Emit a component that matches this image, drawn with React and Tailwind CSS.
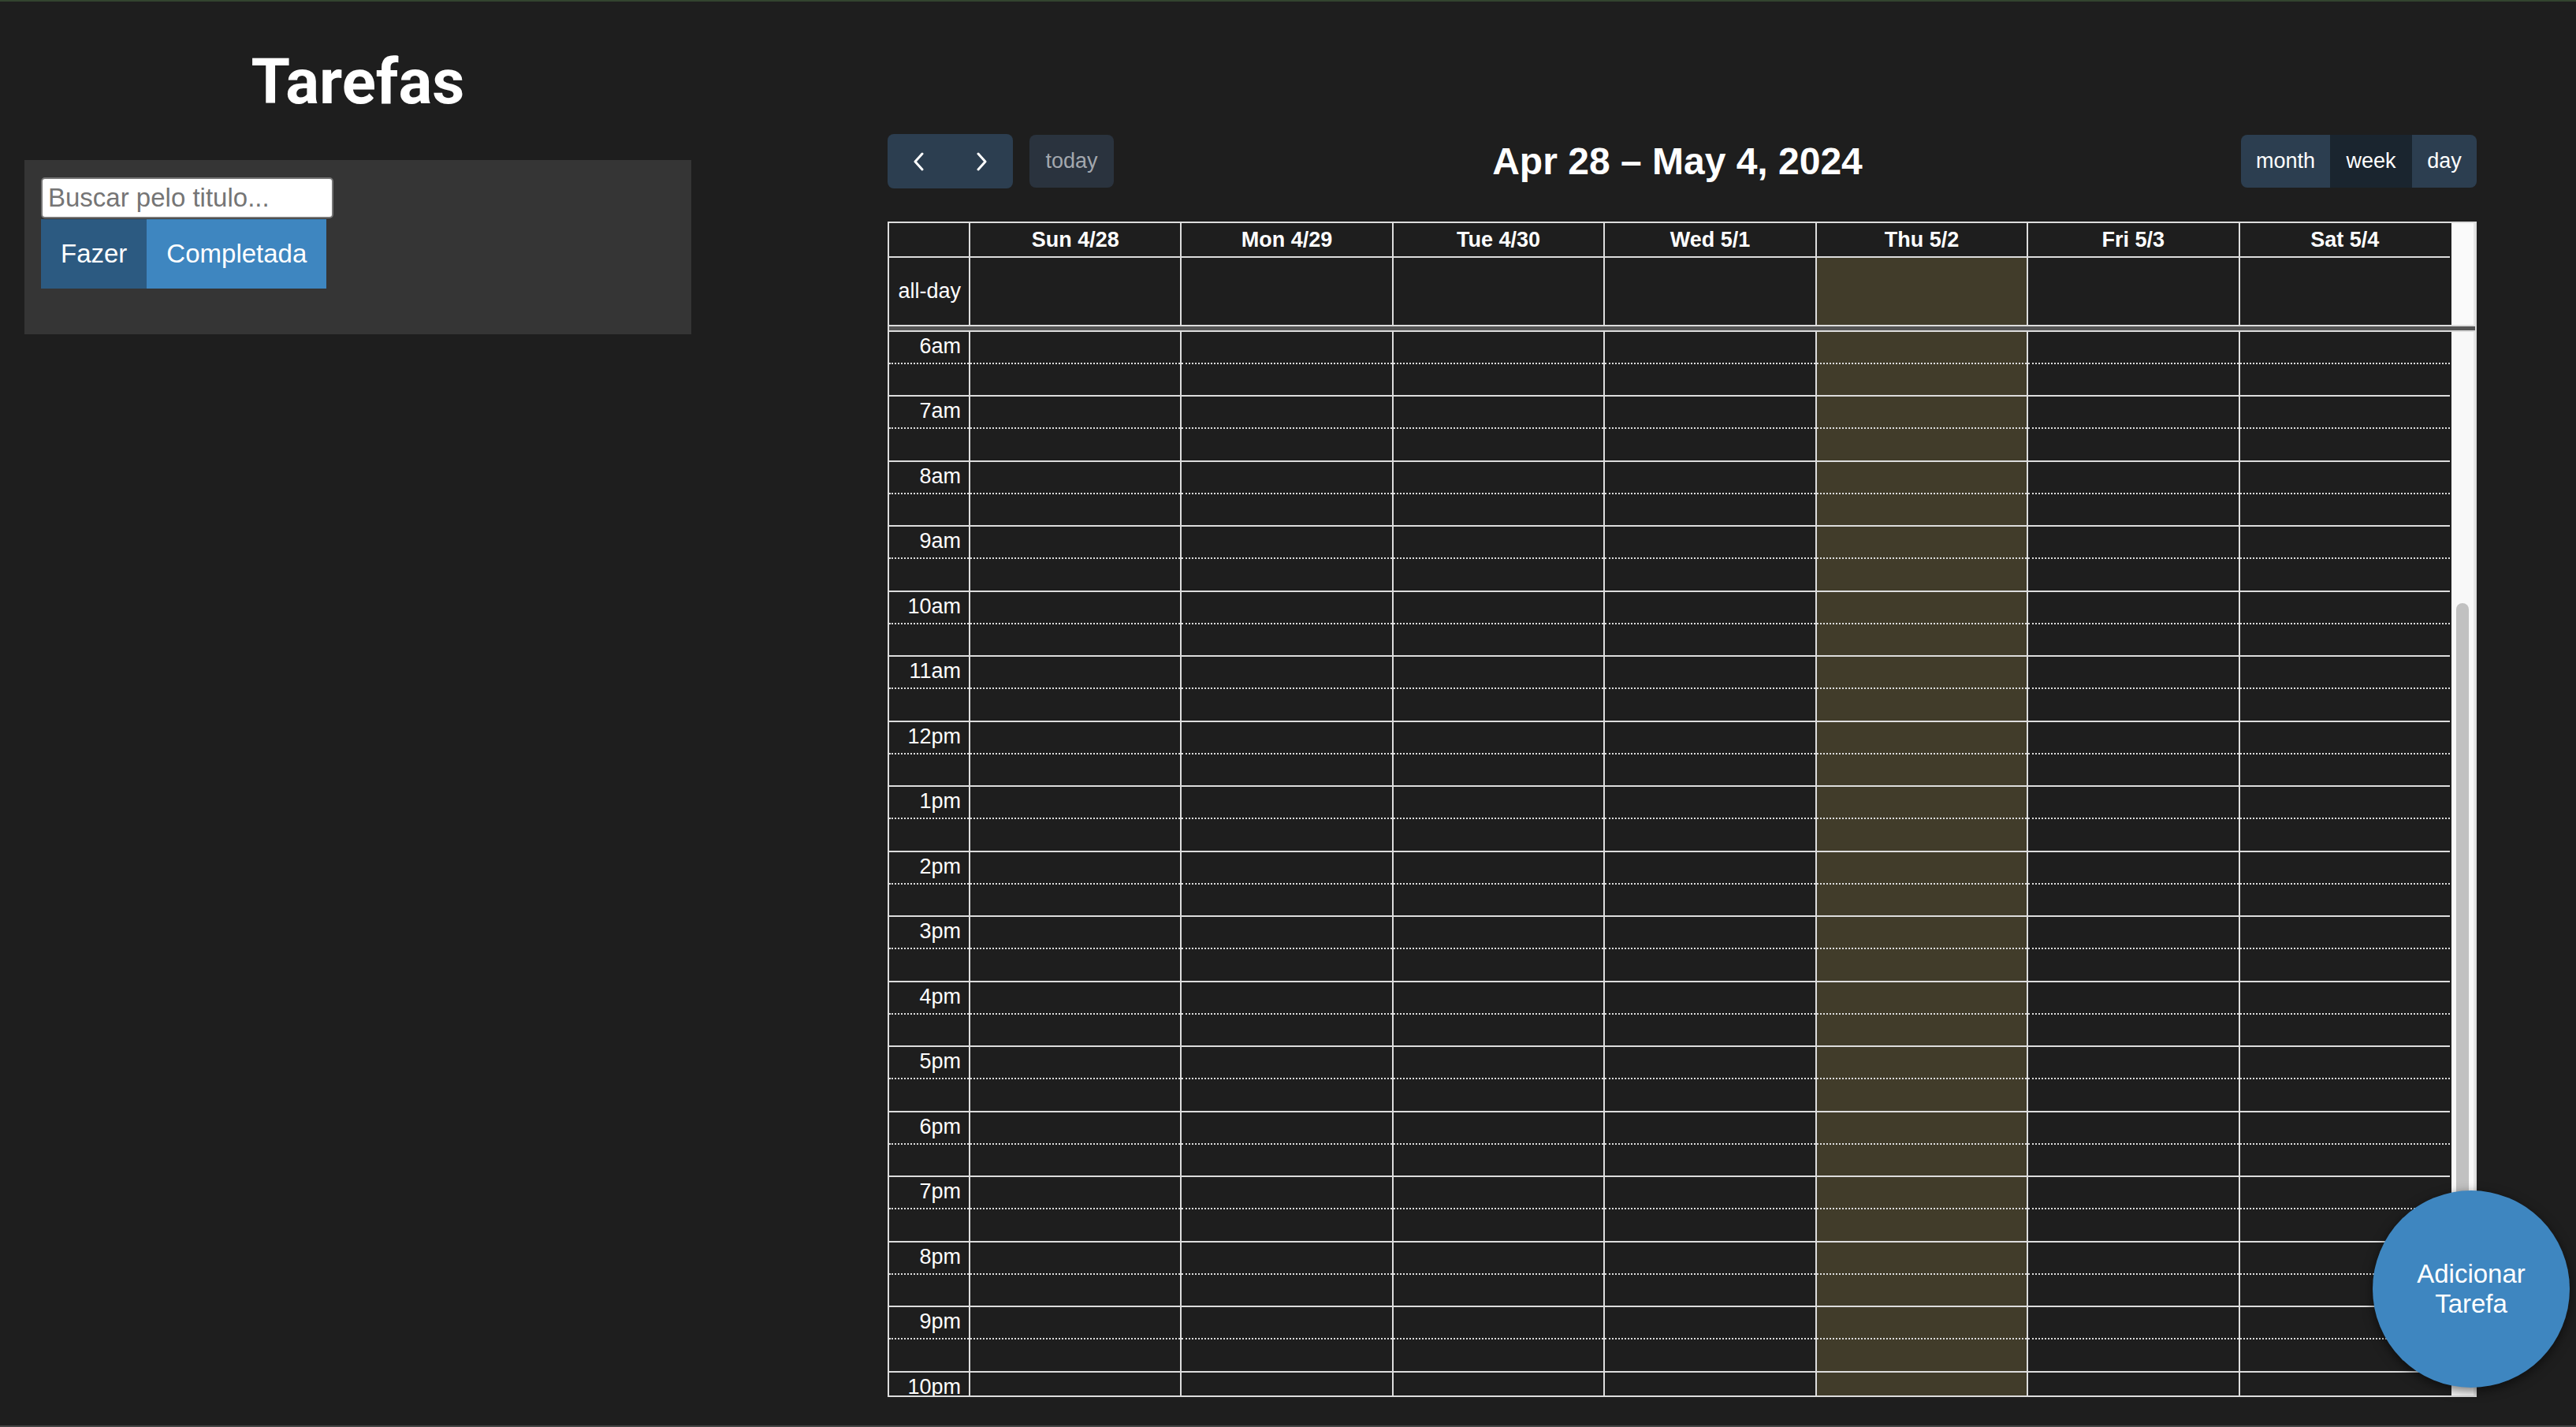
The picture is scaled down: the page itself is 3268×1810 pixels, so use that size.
import React from 'react';

const days = ['Sun 4/28', 'Mon 4/29', 'Tue 4/30', 'Wed 5/1', 'Thu 5/2', 'Fri 5/3', 'Sat 5/4'];
const hours = ['6am', '7am', '8am', '9am', '10am', '11am', '12pm', '1pm', '2pm', '3pm', '4pm', '5pm', '6pm', '7pm', '8pm', '9pm', '10pm'];
const TODAY = 4;

const slots = [];
hours.forEach((h) => {
  slots.push({ label: h, minor: true });
  slots.push({ label: '', minor: false });
});

function slotClass(i) {
  const h = i % 4 === 3 ? 'h-[42px]' : 'h-[41px]';
  const line = slots[i].minor ? 'border-dotted' : 'border-solid';
  return `${h} ${line} border-b-2 border-[#ddd]`;
}

function Chevron({ dir }) {
  return (
    <svg width="16" height="24" viewBox="0 0 16 24" fill="none" stroke="white" strokeWidth="3" strokeLinecap="round" strokeLinejoin="round">
      {dir === 'left' ? <polyline points="12,2 3,12 12,22" /> : <polyline points="4,2 13,12 4,22" />}
    </svg>
  );
}

export default function App() {
  return (
    <div className="relative h-[1810px] w-[3268px] overflow-hidden border-t-2 border-[#33442f] bg-[#1e1e1e] font-['Liberation_Sans',Arial,sans-serif] text-white">
      <div className="flex">
        <aside className="w-[908px] shrink-0">
          <h1 className="mt-[54px] text-center font-['Roboto',sans-serif] text-[80px] font-bold leading-[97px]">Tarefas</h1>
          <div className="mx-[31px] mt-[50px] h-[221px] bg-[#353535] px-[21px] pt-[22px]">
            <input
              placeholder="Buscar pelo titulo..."
              className="block h-[52px] w-[371px] rounded-[5px] border-2 border-[#767676] bg-white px-[7px] text-[33px] text-black outline-none placeholder:text-[#757575]"
            />
            <div className="mt-px flex">
              <button className="h-[88px] bg-[#2c5a81] px-[25px] text-[33px] text-white">Fazer</button>
              <button className="h-[88px] bg-[#3e86c0] px-[25px] text-[33px] text-white">Completada</button>
            </div>
          </div>
        </aside>

        <main className="ml-[218px] w-[2016px] shrink-0">
          <div className="mt-[168px] flex h-[69px] items-center justify-between">
            <div className="flex items-center">
              <div className="flex h-[69px] overflow-hidden rounded-[8px] bg-[#2c3e50]">
                <button className="flex w-[79.5px] items-center justify-center"><Chevron dir="left" /></button>
                <button className="flex w-[79.5px] items-center justify-center"><Chevron dir="right" /></button>
              </div>
              <button className="ml-[21px] h-[67px] w-[107px] rounded-[8px] bg-[#2a333e] text-[27px] text-[#a3a8ae]">today</button>
            </div>
            <h2 className="text-[48px] font-bold">Apr 28 – May 4, 2024</h2>
            <div className="flex h-[67px] overflow-hidden rounded-[8px] text-[27px]">
              <button className="w-[113px] bg-[#2c3e50]">month</button>
              <button className="w-[104px] bg-[#1a252f]">week</button>
              <button className="w-[82px] bg-[#2c3e50]">day</button>
            </div>
          </div>

          <div className="mt-[42px] h-[1491px] border-2 border-[#ddd]">
            <div className="flex">
              <div className="w-[1980px]">
                <div className="grid h-[44px] grid-cols-[101px_repeat(7,minmax(0,1fr))] border-b-2 border-[#ddd]">
                  <div />
                  {days.map((d) => (
                    <div key={d} className="flex items-center justify-center border-l-2 border-[#ddd] text-[27px] font-bold">{d}</div>
                  ))}
                </div>
                <div className="grid h-[85px] grid-cols-[101px_repeat(7,minmax(0,1fr))]">
                  <div className="flex items-center justify-end pr-[10px] text-[27px]">all-day</div>
                  {days.map((d, i) => (
                    <div key={d} className={`border-l-2 border-[#ddd] ${i === TODAY ? 'bg-[#413c2a]' : ''}`} />
                  ))}
                </div>
              </div>
              <div className="ml-[2px] w-[30px] border-r-2 border-[#e6e6e6] bg-[#fafafa]" />
            </div>
            <div className="h-[9px] border-y-2 border-[#ddd] bg-[#555]" />
            <div className="flex h-[1349px]">
              <div className="grid w-[1980px] grid-cols-[101px_repeat(7,minmax(0,1fr))] overflow-hidden">
                <div className="flex flex-col">
                  {slots.map((s, i) => (
                    <div key={i} className={`flex shrink-0 items-center justify-end pb-[3px] pr-[10px] text-[27px] ${slotClass(i)}`}>{s.label}</div>
                  ))}
                </div>
                {days.map((d, j) => (
                  <div key={d} className="flex flex-col border-l-2 border-[#ddd]">
                    {slots.map((s, i) => (
                      <div key={i} className={`shrink-0 ${slotClass(i)} ${j === TODAY ? 'bg-[#413c2a]' : ''}`} />
                    ))}
                  </div>
                ))}
              </div>
              <div className="relative ml-[2px] w-[30px] border-r-2 border-[#e6e6e6] bg-[#f8f8f8]">
                <div className="absolute left-[6px] top-[344px] h-[920px] w-[16px] rounded-full bg-[#c1c1c1]" />
              </div>
            </div>
          </div>
        </main>
      </div>

      <button className="absolute bottom-[50px] right-[8px] flex h-[250px] w-[250px] flex-col items-center justify-center rounded-full bg-[#3e86c0] text-[33px] leading-[38px] text-white shadow-[0_4px_14px_rgba(0,0,0,0.55)]">
        <span>Adicionar</span>
        <span>Tarefa</span>
      </button>
      <div className="absolute bottom-0 left-0 h-[2px] w-full bg-[#454545]" />
    </div>
  );
}
